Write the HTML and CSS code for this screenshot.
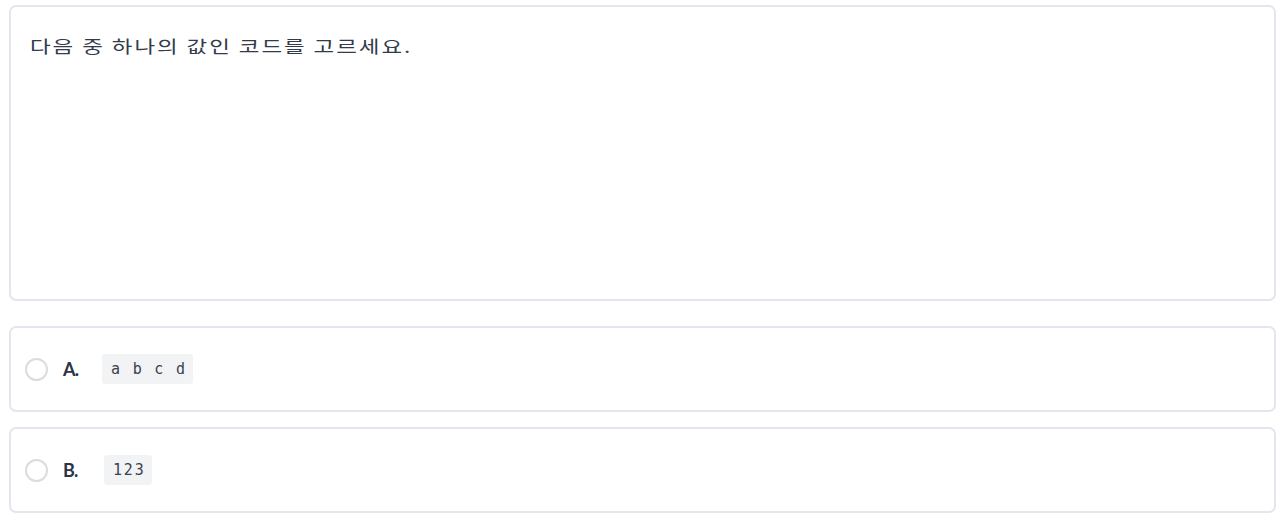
FILE: index.html
```html
<!DOCTYPE html>
<html lang="ko">
<head>
<meta charset="utf-8">
<link rel="stylesheet" href="styles.css">
</head>
<body>
<div class="quiz">
  <div class="question-card">
    <p class="question-text"><span class="question-inner">다음 중 하나의 값인 코드를 고르세요.</span></p>
  </div>
  <div class="options">
    <label class="option">
      <span class="radio"></span>
      <span class="letter">A.</span>
      <code class="chip">a b c d</code>
    </label>
    <label class="option">
      <span class="radio"></span>
      <span class="letter letter-b">B.</span>
      <code class="chip">123</code>
    </label>
  </div>
</div>
</body>
</html>
```
FILE: styles.css
```css
html, body {
  margin: 0;
  padding: 0;
  background: #ffffff;
}
body {
  font-family: Lato, "Noto Sans CJK KR", sans-serif;
  color: #333a48;
}
.quiz {
  padding: 5px 4px 8px 9px;
  display: flex;
  flex-direction: column;
}
.question-card {
  box-sizing: border-box;
  height: 296px;
  border: 2px solid #e4e6ef;
  border-radius: 7px;
  padding: 25px 19px;
}
.question-text {
  margin: 0;
  font-family: "Noto Sans CJK KR", sans-serif;
  font-size: 17px;
  line-height: 28px;
  color: #333a4a;
}
.question-inner {
  display: inline-block;
  transform: scaleX(1.32);
  transform-origin: left center;
  letter-spacing: 1.5px;
  word-spacing: -1px;
  white-space: nowrap;
}
.options {
  margin-top: 25px;
  display: flex;
  flex-direction: column;
  gap: 15px;
}
.option {
  box-sizing: border-box;
  height: 86px;
  border: 2px solid #e4e6ef;
  border-radius: 7px;
  display: flex;
  align-items: center;
  padding-left: 14px;
}
.radio {
  box-sizing: border-box;
  width: 23px;
  height: 23px;
  border: 2px solid #dcdcdc;
  border-radius: 50%;
  flex: none;
}
.letter {
  margin-left: 15px;
  width: 24px;
  font-size: 18px;
  font-weight: 700;
  color: #2c3344;
  letter-spacing: -0.8px;
}
.letter-b {
  width: 26px;
}
.chip {
  margin-left: 15px;
  background: #f2f3f4;
  border-radius: 3px;
  padding: 6px 6px 6px 9px;
  font-family: "DejaVu Sans Mono", monospace;
  font-size: 15px;
  line-height: 18px;
  letter-spacing: 1.8px;
  color: #3a4150;
}
```
